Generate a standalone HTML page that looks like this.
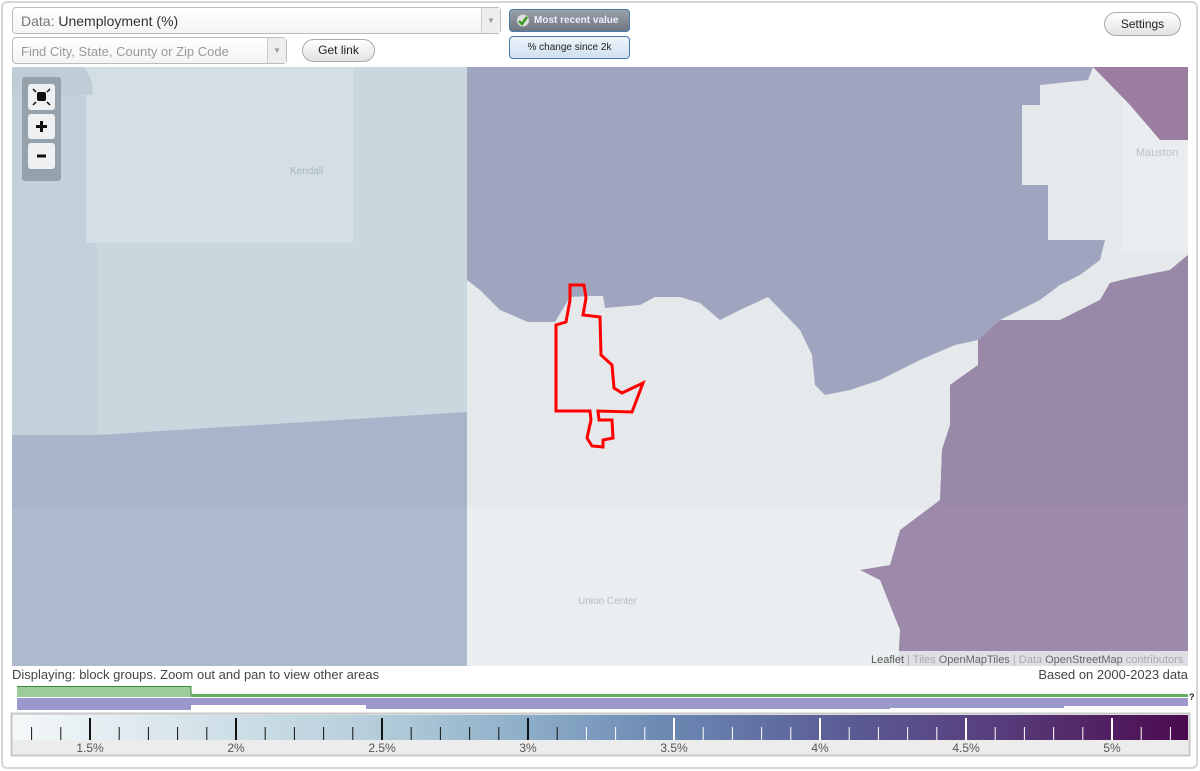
<!DOCTYPE html>
<html><head><meta charset="utf-8"><style>
*{box-sizing:border-box;margin:0;padding:0}
body{width:1200px;height:771px;background:#fff;font-family:"Liberation Sans",Arial,sans-serif;position:relative;overflow:hidden}
.frame{position:absolute;left:1px;top:1px;width:1197px;height:768px;border:2px solid #d6d6d6;border-radius:6px}
.sel{position:absolute;border:1px solid #bbb;border-radius:4px;background:linear-gradient(#fff,#f4f4f4);font-size:14px;color:#555}
.arr{position:absolute;right:0;top:0;bottom:0;width:19px;border-left:1px solid #ccc;background:#eee;color:#999;font-size:8px;text-align:center}
.btn{position:absolute;border:1px solid #aaa;border-radius:12px;background:linear-gradient(#fff,#e2e2e2);font-size:12px;color:#222;text-align:center}
.abs{position:absolute}
</style></head><body>
<div class="frame"></div>
<div class="sel" style="left:12px;top:7px;width:489px;height:27px;padding:5px 8px;font-size:14px"><span style="color:#777">Data: </span><span style="color:#333">Unemployment (%)</span><div class="arr" style="line-height:26px">▼</div></div>
<div class="sel" style="left:12px;top:37px;width:275px;height:27px;padding:6px 8px;font-size:13px;color:#999">Find City, State, County or Zip Code<div class="arr" style="line-height:26px">▼</div></div>
<div class="btn" style="left:302px;top:39px;width:73px;height:23px;line-height:21px">Get link</div>
<div class="abs" style="left:509px;top:9px;width:121px;height:23px;border:1px solid #4a78b0;border-radius:4px;background:linear-gradient(#9aa0a8,#6f767f);color:#eef;font-size:10px;font-weight:bold;line-height:21px;padding-left:24px">Most recent value
<svg style="position:absolute;left:6px;top:4px" width="14" height="13" viewBox="0 0 14 13"><circle cx="7" cy="6.5" r="6" fill="#ddd"/><path d="M3 7 L6 10 L11 3" stroke="#3a9a20" stroke-width="2.5" fill="none"/></svg></div>
<div class="abs" style="left:509px;top:36px;width:121px;height:23px;border:1px solid #4a78b0;border-radius:4px;background:linear-gradient(#eef4fb,#cfe0f0);color:#222;font-size:10px;line-height:21px;text-align:center">% change since 2k</div>
<div class="btn" style="left:1104px;top:12px;width:77px;height:24px;line-height:22px">Settings</div>

<svg class="abs" style="left:0;top:0" width="1200" height="771">
<defs><clipPath id="m"><rect x="12" y="67" width="1176" height="599"/></clipPath>
<linearGradient id="g" x1="0" x2="1"><stop offset="0" stop-color="#f4f8f9"/><stop offset="0.3" stop-color="#b7cfdb"/><stop offset="0.43" stop-color="#8fb0c9"/><stop offset="0.55" stop-color="#6c8ab4"/><stop offset="0.7" stop-color="#5b5e96"/><stop offset="0.85" stop-color="#573a79"/><stop offset="1" stop-color="#4b0a4e"/></linearGradient></defs>
<g clip-path="url(#m)">
<rect x="12" y="67" width="1176" height="599" fill="#e5e9eb"/>
<rect x="12" y="67" width="455" height="370" fill="#c9d7de"/>
<rect x="12" y="67" width="85" height="370" fill="#c3d1da"/>
<rect x="86" y="67" width="267" height="176" fill="#d3dfe4"/>
<path d="M12 67 H80 Q95 75 92 95 L12 95Z" fill="#bfcdd7"/>
<path d="M12 435 L97 435 L467 412 V666 H12Z" fill="#a8b4c9"/>
<rect x="12" y="508" width="455" height="158" fill="#adbacd"/>
<rect x="467" y="508" width="720" height="158" fill="#ebeef0"/>
<path d="M467 67 H1093 L1088 80 L1040 85 V105 L1022 105 V185 L1048 185 V240 L1105 240 L1100 260 L1080 275 L1060 285 L1040 300 L1000 320 L978 340 L955 345 L920 360 L880 380 L850 390 L825 395 L815 385 L812 355 L800 330 L768 297 L740 310 L720 320 L700 303 L680 297 L655 297 L640 305 L605 308 L603 296 L590 296 L570 297 L555 322 L528 322 L500 310 L480 290 L467 280Z" fill="#a0a5bf"/>
<rect x="1122" y="67" width="66" height="185" fill="#e9edef"/>
<path d="M1093 67 H1188 V140 L1160 140 L1130 105 Z" fill="#9a7d9f"/>
<path d="M1188 255 L1170 270 L1130 278 L1110 283 L1100 300 L1060 320 L1000 320 L978 340 L978 365 L950 385 L950 425 L942 450 L940 500 L900 530 L890 565 L860 570 L880 580 L900 630 L898 666 H1188Z" fill="#9d89a9"/>
<path d="M1188 255 L1170 270 L1130 278 L1110 283 L1100 300 L1060 320 L1000 320 L978 340 L978 365 L950 385 L950 425 L942 450 L940 508 H1188Z" fill="#9a88a8"/>
<text x="290" y="174" font-size="10" fill="#a9b6bc">Kendall</text>
<text x="1136" y="156" font-size="11" fill="#b9c3c8">Mauston</text>
<text x="578" y="604" font-size="10" fill="#b3bbc0">Union Center</text>
<path d="M570 285 L584 285 L586 298 L583 315 L600 317 L601 355 L612 365 L614 388 L622 393 L643 383 L632 412 L598 411 L599 420 L612 420 L613 438 L603 440 L603 447 L592 446 L587 438 L591 420 L590 411 L556 411 L556 325 L566 322 L570 300Z" fill="none" stroke="#f00" stroke-width="3"/>
</g>
<rect x="868" y="651" width="320" height="15" fill="#eceef0" opacity="0.85"/>
<text x="871" y="663" font-size="11"><tspan fill="#555">Leaflet</tspan><tspan fill="#aaa"> | Tiles </tspan><tspan fill="#666">OpenMapTiles</tspan><tspan fill="#aaa"> | Data </tspan><tspan fill="#666">OpenStreetMap</tspan><tspan fill="#aaa"> contributors</tspan></text>
<rect x="22" y="77" width="39" height="104" rx="3" fill="#95a2ac"/>
<rect x="28" y="84" width="27" height="26" rx="3" fill="#eef0f2"/>
<rect x="37" y="92" width="9" height="9" fill="#111" rx="2"/>
<path d="M33 89l3 3M50 89l-3 3M33 105l3-3M50 105l-3-3" stroke="#111" stroke-width="1.5"/>
<rect x="28" y="114" width="27" height="25" rx="3" fill="#eef0f2"/>
<path d="M41.5 121v11M36 126.5h11" stroke="#111" stroke-width="3"/>
<rect x="28" y="143" width="27" height="26" rx="3" fill="#eef0f2"/>
<path d="M37 156h9" stroke="#111" stroke-width="3"/>
<text x="12" y="679" font-size="13" fill="#444">Displaying: block groups. Zoom out and pan to view other areas</text>
<text x="1188" y="679" font-size="13" fill="#444" text-anchor="end">Based on 2000-2023 data</text>
<rect x="17" y="686" width="174" height="11" fill="#9ccc98"/>
<rect x="191" y="694" width="997" height="3" fill="#62ad62"/>
<path d="M17 686.5H191V695" stroke="#3a8a3a" fill="none"/>
<rect x="17" y="698" width="1171" height="12" fill="#9b99cb"/>
<rect x="191" y="705" width="175" height="6" fill="#fff"/>
<rect x="890" y="708" width="174" height="3" fill="#fff"/>
<rect x="366" y="709" width="524" height="2" fill="#fff"/>
<rect x="1064" y="706" width="124" height="5" fill="#fff"/>
<text x="1189" y="700" font-size="9" font-weight="bold" fill="#222">?</text>
<rect x="11.5" y="713.5" width="1178" height="42" fill="#ececec" stroke="#c8c8c8" stroke-width="2"/>
<rect x="13" y="715" width="1175" height="25" fill="url(#g)"/>
<g font-size="12" fill="#555" text-anchor="middle">
<text x="90" y="752">1.5%</text><text x="236" y="752">2%</text><text x="382" y="752">2.5%</text><text x="528" y="752">3%</text><text x="674" y="752">3.5%</text><text x="820" y="752">4%</text><text x="966" y="752">4.5%</text><text x="1112" y="752">5%</text>
</g>
<g stroke-width="1">
<path stroke="#111" d="M31.6 727v13M60.8 727v13M119.2 727v13M148.4 727v13M177.6 727v13M206.8 727v13M265.2 727v13M294.4 727v13M323.6 727v13M352.8 727v13M411.2 727v13M440.4 727v13M469.6 727v13M498.8 727v13M557.2 727v13"/>
<path stroke="#111" stroke-width="2" d="M90 718v22M236 718v22M382 718v22M528 718v22"/>
<path stroke="#fff" d="M586.4 727v13M615.6 727v13M644.8 727v13M703.2 727v13M732.4 727v13M761.6 727v13M790.8 727v13M849.2 727v13M878.4 727v13M907.6 727v13M936.8 727v13M995.2 727v13M1024.4 727v13M1053.6 727v13M1082.8 727v13M1141.2 727v13M1170.4 727v13"/>
<path stroke="#fff" stroke-width="2" d="M674 718v22M820 718v22M966 718v22M1112 718v22"/>
</g>
</svg>
</body></html>
